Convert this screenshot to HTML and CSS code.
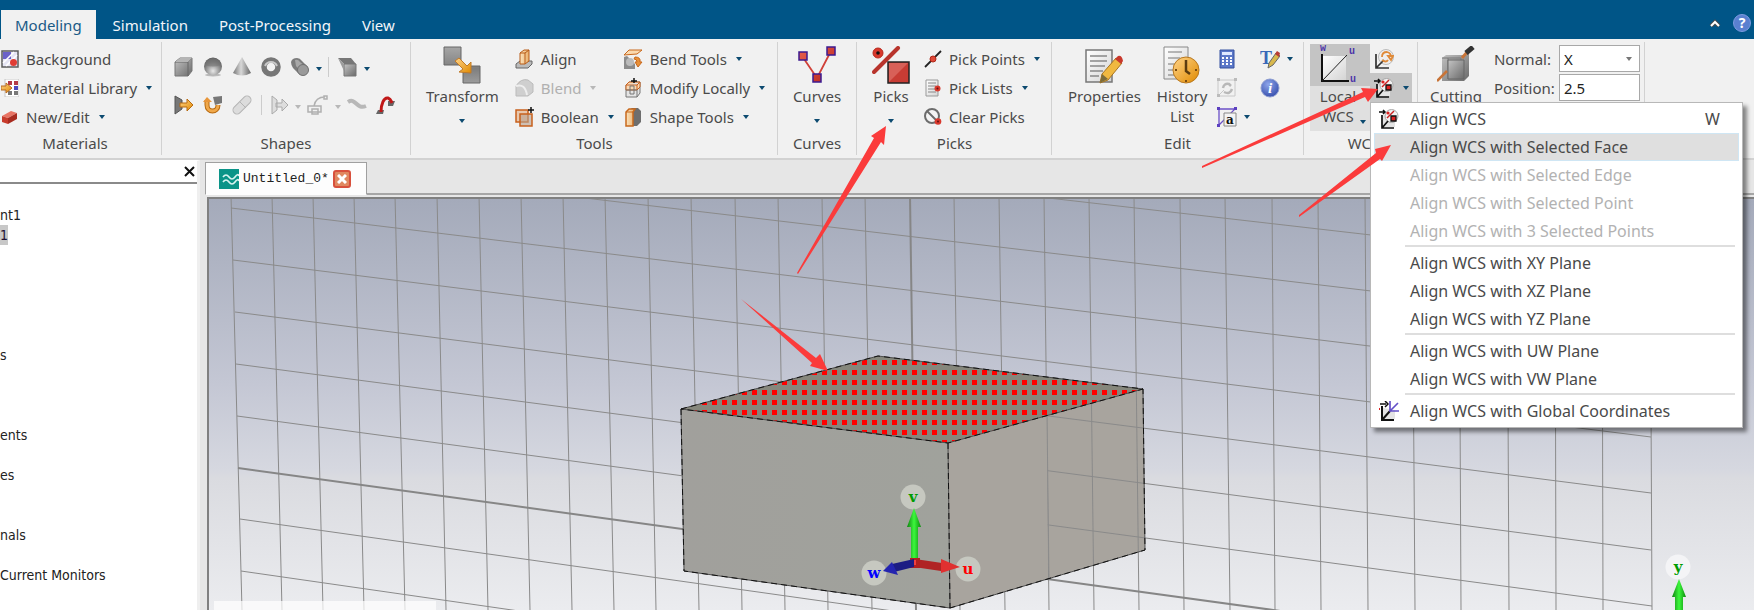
FILE: index.html
```html
<!DOCTYPE html>
<html lang="en">
<head>
<meta charset="utf-8">
<title>Untitled_0*</title>
<link rel="stylesheet" href="styles.css">
</head>
<body>
<svg class="defs" width="0" height="0" aria-hidden="true">
  <defs>
    <linearGradient id="steel" x1="0" y1="0" x2="1" y2="1"><stop offset="0" stop-color="#c4c4c4"/><stop offset="1" stop-color="#6a6a6a"/></linearGradient>
    <linearGradient id="steelH" x1="0" y1="0" x2="1" y2="0"><stop offset="0" stop-color="#777"/><stop offset=".45" stop-color="#d8d8d8"/><stop offset="1" stop-color="#666"/></linearGradient>
    <linearGradient id="steelV" x1="0" y1="0" x2="0" y2="1"><stop offset="0" stop-color="#a6a6a6"/><stop offset=".6" stop-color="#7e7e7e"/><stop offset="1" stop-color="#9c9c9c"/></linearGradient>
    <radialGradient id="ball" cx=".5" cy=".75" r=".7"><stop offset="0" stop-color="#e8e8e8"/><stop offset=".7" stop-color="#7a7a7a"/><stop offset="1" stop-color="#5a5a5a"/></radialGradient>
    <linearGradient id="amber" x1="0" y1="0" x2="1" y2="1"><stop offset="0" stop-color="#ffd48a"/><stop offset="1" stop-color="#e08a00"/></linearGradient>
    <linearGradient id="peach" x1="0" y1="0" x2="1" y2="0"><stop offset="0" stop-color="#fbe3bd"/><stop offset="1" stop-color="#e9ae6a"/></linearGradient>
    <linearGradient id="red" x1="0" y1="0" x2="1" y2="1"><stop offset="0" stop-color="#e8604e"/><stop offset="1" stop-color="#b8241c"/></linearGradient>
    <linearGradient id="paper" x1="0" y1="0" x2="1" y2="1"><stop offset="0" stop-color="#fff"/><stop offset="1" stop-color="#d4d4d4"/></linearGradient>
    <radialGradient id="blue" cx=".4" cy=".3" r=".8"><stop offset="0" stop-color="#8ea6ea"/><stop offset="1" stop-color="#2f47a8"/></radialGradient>
    <symbol id="align-wcs" viewBox="0 0 20 20">
      <path d="M4 6v12h12V9z" fill="#e4e4e4"/>
      <circle cx="12.500" cy="7" r="6.500" fill="#f2f2f2" stroke="#a8a8a8"/>
      <path d="M3 6v13h12M3 19l6-7" fill="none" stroke="#111" stroke-width="1.700"/>
      <path d="M0 3h5M4 1l2 2-2 2" fill="none" stroke="#111" stroke-width="1.500"/>
      <circle cx="9" cy="4" r="1.600" fill="#d22"/><path d="M8 9l7-7" stroke="#c22" stroke-width="1.500"/>
      <path d="M12 7h5v5h-5z" fill="#d22" stroke="#111" stroke-width="1.300"/>
    </symbol>
  </defs>
</svg>

<div class="app">
  <header class="titlebar">
    <nav class="tabs">
      <button class="tab tab-active">Modeling</button>
      <button class="tab">Simulation</button>
      <button class="tab">Post-Processing</button>
      <button class="tab">View</button>
    </nav>
    <div class="title-tools">
      <button class="plain" aria-label="Collapse ribbon"><svg width="12" height="8" viewBox="0 0 12 8"><path d="M2 7l4-4 4 4" fill="none" stroke="#4a4a4a" stroke-width="4"/><path d="M2 7l4-4 4 4" fill="none" stroke="#fff" stroke-width="2"/></svg></button>
      <button class="plain help" aria-label="Help">?</button>
    </div>
  </header>

  <section class="ribbon">
    <div class="group g-materials">
      <div class="body">
        <div class="col">
          <button class="item"><svg width="18" height="18" viewBox="0 0 18 18"><path d="M1 1h16v16H1z" fill="#e4e4f4" stroke="#5c5c5c" stroke-width="1.500"/><path d="M2 2h8v7H2z" fill="#6b62c8"/><path d="M2 13l11-11M5 16L16 5" stroke="#fff" stroke-width="1.500"/><circle cx="12.500" cy="12.500" r="3.500" fill="#e03c34"/></svg><span>Background</span></button>
          <button class="item"><svg width="18" height="18" viewBox="0 0 18 18"><path d="M4 0h14v18H4z" fill="#fff" stroke="#c6c6c6"/><path d="M7 2h4v4H7zM13 2h4v4h-4z" fill="#b43a48"/><path d="M13 7h4v4h-4z" fill="#4c49c0"/><path d="M7 12h4v4H7zM13 12h4v4h-4z" fill="#777"/><path d="M0 7h5V4l6 5-6 5v-3H0z" fill="url(#amber)" stroke="#b86a20"/></svg><span>Material Library</span><i class="caret"></i></button>
          <button class="item"><svg width="18" height="18" viewBox="0 0 18 18"><path d="M1 8l9-5 6 2-9 5z" fill="#e87464"/><path d="M1 8l6 2v6l-6-2z" fill="#c83c2c"/><path d="M7 10l9-5v6l-9 5z" fill="#a82c20"/></svg><span>New/Edit</span><i class="caret"></i></button>
        </div>
      </div>
      <div class="label">Materials</div>
    </div>

    <div class="group g-shapes">
      <div class="body shapes">
        <div class="strip">
          <button class="plain" aria-label="Brick"><svg width="20" height="20" viewBox="0 0 20 20"><path d="M1 5l5-4h12v13l-4 5H1z" fill="url(#steel)" stroke="#777"/><path d="M1 5h13l4-4M14 5v14" fill="none" stroke="#666"/><path d="M1 5l5-4h12l-4 4z" fill="#b5b5b5"/></svg></button>
          <button class="plain" aria-label="Sphere"><svg width="20" height="20" viewBox="0 0 20 20"><ellipse cx="10" cy="18" rx="8" ry="1.500" fill="#bbb"/><circle cx="10" cy="9.500" r="9" fill="url(#ball)"/><path d="M2 8a8 7 0 0 1 16 0q-8 3-16 0z" fill="#777" opacity=".6"/></svg></button>
          <button class="plain" aria-label="Cone"><svg width="20" height="20" viewBox="0 0 20 20"><path d="M10 0l9 16q-9 5-18 0z" fill="url(#steelH)"/></svg></button>
          <button class="plain" aria-label="Torus"><svg width="20" height="20" viewBox="0 0 20 20"><circle cx="10" cy="10" r="7" fill="none" stroke="#777" stroke-width="5.500"/><path d="M4 9a6.500 6.500 0 0 1 12 0" fill="none" stroke="#c8c8c8" stroke-width="2"/></svg></button>
          <button class="plain" aria-label="Cylinder"><svg width="20" height="20" viewBox="0 0 20 20"><path d="M1 5q1-4 6-4 3 0 5 3l6 6-8 8-7-7q-2-3-2-6z" fill="#7c7c7c"/><path d="M5 3q3-1 5 2l6 5-5 5-5-6z" fill="#a8a8a8"/><circle cx="13" cy="13" r="5.500" fill="#9a9a9a" stroke="#707070"/></svg></button>
          <i class="caret"></i><i class="bar"></i>
          <button class="plain" aria-label="Extrude face"><svg width="20" height="20" viewBox="0 0 20 20"><path d="M0 1h13l5 6H6z" fill="#777"/><path d="M6 7h12v12H6z" fill="url(#steel)" stroke="#777"/><path d="M0 1l6 6v7z" fill="#9c9c9c"/></svg></button>
          <i class="caret"></i>
        </div>
        <div class="strip">
          <button class="plain" aria-label="Extrude"><svg width="20" height="20" viewBox="0 0 20 20"><path d="M1 1l7 4v9l-7 5z" fill="#777" stroke="#555"/><path d="M6 8h7V4l6 6-6 6v-4H6z" fill="url(#amber)" stroke="#b86a10"/></svg></button>
          <button class="plain" aria-label="Rotate"><svg width="20" height="20" viewBox="0 0 20 20"><path d="M10 2l9-1v7l-7 2z" fill="#777"/><path d="M4 5v5c0 8 11 8 11 0" fill="none" stroke="#b86a10" stroke-width="5"/><path d="M4 5v5c0 8 11 8 11 0" fill="none" stroke="#f0a84a" stroke-width="3"/><path d="M0 7l4-5 5 5z" fill="#e8963a"/></svg></button>
          <button class="plain" aria-label="Loft" disabled><svg width="20" height="20" viewBox="0 0 20 20"><path d="M5 15L15 5" stroke="#b4b4b4" stroke-width="9" stroke-linecap="round"/><path d="M5 15L15 5" stroke="#dcdcdc" stroke-width="7" stroke-linecap="round"/><path d="M8 7l6 6" stroke="#b4b4b4"/></svg></button>
          <i class="bar"></i>
          <button class="plain" aria-label="Extrude curve" disabled><svg width="18" height="20" viewBox="0 0 18 20"><path d="M1 1l5 4v10l-5 4zM5 8h6V4l6 6-6 6v-4H5z" fill="#ddd" stroke="#aaa"/></svg></button>
          <i class="caret caret-off"></i>
          <button class="plain" aria-label="Sweep curve" disabled><svg width="22" height="20" viewBox="0 0 22 20"><path d="M1 11h13v6H1zM5 14h6v5H5zM7 11c1-6 4-9 11-9M17 1h3v3h-3z" fill="none" stroke="#b0b0b0" stroke-width="1.500"/></svg></button>
          <i class="caret caret-off"></i>
          <button class="plain" aria-label="Trace" disabled><svg width="20" height="20" viewBox="0 0 20 20"><path d="M1 7c8-5 8 8 18 4" fill="none" stroke="#b8b8b8" stroke-width="4"/></svg></button>
          <button class="plain" aria-label="Bond wire"><svg width="20" height="20" viewBox="0 0 20 20"><path d="M2 15h6l-1 4H0zM12 6h7l-2 5h-5z" fill="#666"/><path d="M5 17c0-8 3-15 7-14 3 1 3 3 4 5" fill="none" stroke="#c01818" stroke-width="3"/></svg></button>
        </div>
      </div>
      <div class="label">Shapes</div>
    </div>

    <div class="group g-tools">
      <div class="body">
        <button class="big"><svg width="38" height="38" viewBox="0 0 38 38"><path d="M1 1h17v18H1zM20 20h17v17H20z" fill="url(#steelV)" stroke="#666"/><path d="M12 15l4-3 8 8 4-4v11l-12-1 4-3z" fill="url(#amber)" stroke="#c07a28"/></svg><span>Transform</span><i class="caret"></i></button>
        <div class="col col-second">
          <button class="item"><svg width="19" height="20" viewBox="0 0 19 20"><path d="M1 15l4-3h12v3l-4 4H1z" fill="#bbb" stroke="#666"/><path d="M5 4l4-3h5v11l-4 3H5z" fill="url(#peach)" stroke="#b85c18"/><path d="M5 4h5l4-3M10 4v11" fill="none" stroke="#b85c18"/></svg><span>Align</span></button>
          <button class="item" disabled><svg width="19" height="20" viewBox="0 0 19 20"><path d="M1 8q5-8 12-6l5 4v8l-5 4H1z" fill="#cfcfcf" stroke="#bbb"/><path d="M1 8q9-3 11 9" fill="none" stroke="#eee" stroke-width="2"/></svg><span>Blend</span><i class="caret caret-off"></i></button>
          <button class="item"><svg width="19" height="20" viewBox="0 0 19 20"><path d="M1 3h12v12H1z" fill="#e8c8ae" stroke="#c8601c" stroke-width="1.500"/><path d="M5 7h12v12H5z" fill="#b8a08e" fill-opacity=".6" stroke="#c8601c" stroke-width="1.500"/><path d="M13 3h6M16 0v6" stroke="#111" stroke-width="1.500"/></svg><span>Boolean</span><i class="caret"></i></button>
        </div>
        <div class="col col-third">
          <button class="item"><svg width="20" height="20" viewBox="0 0 20 20"><path d="M1 6l5-5h13l-5 4z" fill="#fbd9ae" stroke="#c8681c"/><path d="M1 8l3-1 8 8v5H1z" fill="#8c8c8c"/><circle cx="7" cy="13" r="4" fill="#bbb"/><path d="M12 8q6 0 5 5h2l-4 5-3-5h2q0-3-3-3z" fill="#e89038" stroke="#c8681c"/></svg><span>Bend Tools</span><i class="caret"></i></button>
          <button class="item"><svg width="20" height="20" viewBox="0 0 20 20"><path d="M3 7l3-3h11v11l-3 4H3z" fill="#e4e4e4" stroke="#777"/><path d="M3 7l3-3h11v5l-3 3H3zM3 7h11l3-3M14 7v5" fill="#f8d8b4" stroke="#c8601c"/><path d="M3 12h11v7M7 8h4v8H7z" fill="none" stroke="#777"/><path d="M8 3h6M11 0v5" stroke="#111" stroke-width="1.500"/></svg><span>Modify Locally</span><i class="caret"></i></button>
          <button class="item"><svg width="20" height="20" viewBox="0 0 20 20"><path d="M6 3l3-2h6l3 3v11l-4 4H6z" fill="#6e6e6e"/><path d="M3 5l3-3h6l-2 3v14H3z" fill="url(#peach)" stroke="#c8681c" stroke-width="1.500"/><path d="M3 5h7" stroke="#c8681c"/></svg><span>Shape Tools</span><i class="caret"></i></button>
        </div>
      </div>
      <div class="label">Tools</div>
    </div>

    <div class="group g-curves">
      <div class="body center">
        <button class="big"><svg width="38" height="38" viewBox="0 0 38 38"><path d="M4 10l15 22L33 5" fill="none" stroke="#d04038" stroke-width="1.800"/><path d="M1 6h8v8H1zM29 1h8v8h-8zM15 28h8v8h-8z" fill="url(#red)" stroke="#3c1a90" stroke-width="1.500"/></svg><span>Curves</span><i class="caret"></i></button>
      </div>
      <div class="label">Curves</div>
    </div>

    <div class="group g-picks">
      <div class="body">
        <button class="big"><svg width="38" height="38" viewBox="0 0 38 38"><circle cx="6" cy="7" r="5" fill="#d8382c" stroke="#b8281c"/><circle cx="6" cy="7" r="1.800" fill="#111"/><path d="M2 26L26 2" stroke="#b8342c" stroke-width="4" stroke-linecap="round"/><path d="M16 16h21v21H16z" fill="#c83c34" stroke="#222" stroke-width="1.500"/><path d="M17 17h19L17 36z" fill="#d86058"/></svg><span>Picks</span><i class="caret"></i></button>
        <div class="col col-picks">
          <button class="item"><svg width="18" height="18" viewBox="0 0 18 18"><path d="M1 17L17 1" stroke="#222" stroke-width="1.800"/><circle cx="9" cy="9" r="3" fill="#e04838" stroke="#b02818"/></svg><span>Pick Points</span><i class="caret"></i></button>
          <button class="item"><svg width="18" height="18" viewBox="0 0 18 18"><path d="M2 1h12v16H2z" fill="url(#paper)" stroke="#999"/><path d="M4 4h8M4 7h8M4 10h8M4 13h8" stroke="#888"/><circle cx="13.500" cy="9.500" r="3" fill="#d8382c"/><circle cx="13.500" cy="9.500" r="1" fill="#611"/></svg><span>Pick Lists</span><i class="caret"></i></button>
          <button class="item"><svg width="18" height="18" viewBox="0 0 18 18"><circle cx="8" cy="8" r="7" fill="#f4f4f4" stroke="#6c6c6c" stroke-width="2"/><path d="M3 3l10 10" stroke="#6c6c6c" stroke-width="2"/><circle cx="14" cy="13.500" r="3.300" fill="#d8382c"/><circle cx="14" cy="13.500" r="1" fill="#611"/></svg><span>Clear Picks</span></button>
        </div>
      </div>
      <div class="label">Picks</div>
    </div>

    <div class="group g-edit">
      <div class="body">
        <button class="big"><svg width="38" height="38" viewBox="0 0 38 38"><path d="M1 4h26v32H1z" fill="url(#paper)" stroke="#777" stroke-width="1.500"/><path d="M5 10h17M5 15h17M5 20h15M5 25h13M5 30h9" stroke="#888" stroke-width="1.500"/><path d="M15 37l2-9L31 12l6 5-14 17z" fill="#f0b840" stroke="#a87420"/><path d="M15 37l2-9 6 5z" fill="#7c6c3c"/><path d="M30 13l3-3q4-1 5 5l-2 3z" fill="#c8382c"/></svg><span>Properties</span></button>
        <button class="big"><svg width="38" height="38" viewBox="0 0 38 38"><path d="M1 1h24v32H1z" fill="url(#paper)" stroke="#888"/><path d="M5 6h14M5 12h12M5 18h8M5 24h6M5 29h6" stroke="#777"/><circle cx="23" cy="24" r="13" fill="url(#amber)" stroke="#b87820"/><path d="M23 14v11l4 3" fill="none" stroke="#5c3c10" stroke-width="2.500"/><path d="M23 34v2M12 24h2M32 24h2" stroke="#7c4c10" stroke-width="2"/></svg><span>History<br>List</span></button>
        <div class="col col-mini">
          <button class="item" aria-label="Calculator"><svg width="20" height="20" viewBox="0 0 20 20"><path d="M3 1h14v18H3z" fill="#5c78c8" stroke="#3450a0"/><path d="M5 3h10v3H5z" fill="#dfe8ff"/><path d="M5 9h2M9 9h2M13 9h2M5 12h2M9 12h2M13 12h2M5 15h2M9 15h2M13 15h2" stroke="#fff" stroke-width="2"/></svg></button>
          <button class="item" aria-label="Update" disabled><svg width="20" height="20" viewBox="0 0 20 20"><path d="M1 18V2h17v16H1l6-6" fill="none" stroke="#c8c8c8"/><path d="M0 0h3v3H0zM17 0h3v3h-3zM0 16h3v3H0z" fill="#bbb"/><path d="M6 10q1-5 6-4l2 2M15 11q-2 6-8 3" fill="none" stroke="#b8b8b8" stroke-width="2.500"/></svg></button>
          <button class="item" aria-label="Parameters"><svg width="20" height="20" viewBox="0 0 20 20"><path d="M2 18V2h16L2 18" fill="none" stroke="#6c50c8" stroke-width="1.300"/><path d="M0 0h3v3H0zM17 0h3v3h-3zM0 17h3v3H0z" fill="#5c40c0"/><path d="M7 6h12v13H7z" fill="#f4f4f4" stroke="#888"/><text x="9" y="17" class="glyph-a">a</text></svg><i class="caret"></i></button>
        </div>
        <div class="col col-mini">
          <button class="item" aria-label="Rename"><svg width="20" height="20" viewBox="0 0 20 20"><text x="0" y="15" class="glyph-t">T</text><path d="M8 19l1-5 7-10 4 3-7 9z" fill="#d8b84c" stroke="#666"/><path d="M15 5l2-3 3 2-1 4z" fill="#b83c34"/></svg><i class="caret"></i></button>
          <button class="item" aria-label="Information"><svg width="20" height="20" viewBox="0 0 20 20"><circle cx="10" cy="10" r="9" fill="url(#blue)" stroke="#8c9cd0"/><text x="8" y="15" class="glyph-i">i</text></svg></button>
        </div>
      </div>
      <div class="label">Edit</div>
    </div>

    <div class="group g-wcs">
      <div class="body">
        <button class="big local"><span class="local-top"><svg width="44" height="40" viewBox="0 0 44 40"><path d="M6 12h24v24H6z" fill="url(#paper)"/><path d="M6 10v27h27" fill="none" stroke="#111" stroke-width="2"/><path d="M6 37l25-26" stroke="#222"/><text x="4" y="7" class="axis">w</text><text x="33" y="10" class="axis">u</text><text x="34" y="38" class="axis">u</text></svg></span><span>Local<br>WCS</span><i class="caret local-caret"></i></button>
        <div class="col wcs-col">
          <button class="item" aria-label="Transform WCS"><svg width="20" height="20" viewBox="0 0 20 20"><circle cx="12" cy="8" r="7.500" fill="#eee" stroke="#bbb"/><path d="M2 5v14h13M2 19l8-8" fill="none" stroke="#333" stroke-width="1.700"/><path d="M8 8q0-5 5-5 4 1 4 5M14 7h5l-2 4zM8 11q4 3 6 0" fill="none" stroke="#e08a38" stroke-width="1.800"/></svg></button>
          <button class="item hot" aria-label="Align WCS"><svg width="20" height="20"><use href="#align-wcs"/></svg><i class="caret"></i></button>
        </div>
      </div>
      <div class="label">WCS</div>
      <menu class="menu">
        <li><button><svg class="menu-icon" width="20" height="20"><use href="#align-wcs"/></svg><span>Align WCS</span><kbd>W</kbd></button></li>
        <li><button class="current">Align WCS with Selected Face</button></li>
        <li><button disabled>Align WCS with Selected Edge</button></li>
        <li><button disabled>Align WCS with Selected Point</button></li>
        <li><button disabled>Align WCS with 3 Selected Points</button></li>
        <li class="rule"></li>
        <li><button>Align WCS with XY Plane</button></li>
        <li><button>Align WCS with XZ Plane</button></li>
        <li><button>Align WCS with YZ Plane</button></li>
        <li class="rule"></li>
        <li><button>Align WCS with UW Plane</button></li>
        <li><button>Align WCS with VW Plane</button></li>
        <li class="rule"></li>
        <li><button><svg class="menu-icon" width="20" height="20" viewBox="0 0 20 20"><path d="M4 7v11h12V9z" fill="#e4e4e4"/><path d="M3 5v14h12M3 19l8-9" fill="none" stroke="#111" stroke-width="2"/><path d="M1 3h6M6 0l3 3-3 3" fill="none" stroke="#111" stroke-width="1.500"/><path d="M11 0v10h9M11 10l8-8" fill="none" stroke="#6450c8" stroke-width="1.700"/><path d="M0 8h1" stroke="#d22" stroke-width="2"/></svg><span>Align WCS with Global Coordinates</span></button></li>
      </menu>
    </div>

    <div class="group g-cut">
      <div class="body">
        <button class="big"><svg width="38" height="38" viewBox="0 0 38 38"><path d="M5 12l4-3h20l3-3v24l-5 5H5z" fill="url(#steel)"/><path d="M5 12h19v23M11 12v21" fill="none" stroke="#777"/><path d="M11 14h16v19H11z" fill="url(#steel)" stroke="#666"/><path d="M0 35l10-10" stroke="#c87438" stroke-width="2.500"/><path d="M25 12l6-7" stroke="#c87438" stroke-width="3"/><path d="M29 7l7-6" stroke="#333" stroke-width="5"/></svg><span>Cutting</span></button>
        <form class="fields">
          <label for="normal">Normal:</label>
          <span class="pick"><select id="normal"><option>X</option><option>Y</option><option>Z</option></select><i class="caret caret-field"></i></span>
          <label for="position">Position:</label>
          <input id="position" type="text" value="2.5">
        </form>
      </div>
    </div>
  </section>

  <main class="work">
    <aside class="tree">
      <div class="tree-head"><button class="plain" aria-label="Close panel"><svg width="12" height="12" viewBox="0 0 12 12"><path d="M1 1l9 9M10 1l-9 9" stroke="#111" stroke-width="2"/></svg></button></div>
      <ul class="nodes">
        <li>nt1</li><li><span class="picked">1</span></li><li></li><li></li><li></li><li></li><li></li><li>s</li><li></li><li></li><li></li><li>ents</li><li></li><li>es</li><li></li><li></li><li>nals</li><li></li><li>Current Monitors</li>
      </ul>
    </aside>
    <section class="docs">
      <div class="doc-tabs">
        <div class="doc-tab">
          <svg width="20" height="20" viewBox="0 0 20 20"><path d="M0 0h20v20H0z" fill="#0b9488"/><path d="M4 8q3-4 6 0t6 0 4-1M4 13q3-4 6 0t6 0 4-1" fill="none" stroke="#d8f4f0" stroke-width="1.700"/></svg>
          <span>Untitled_0*</span>
          <button class="doc-close" aria-label="Close Untitled_0"><svg width="10" height="10" viewBox="0 0 10 10"><path d="M1 1l8 8M9 1L1 9" stroke="#fff" stroke-width="3"/></svg></button>
        </div>
      </div>
      <div class="view">
        <svg class="scene" viewBox="209 199 1545 411" preserveAspectRatio="xMinYMin slice">
          <defs>
            <pattern id="dots" width="10" height="10" patternUnits="userSpaceOnUse" x="882" y="360"><path d="M0 0h5v5H0z" fill="#f00"/></pattern>
            <linearGradient id="leftFace" x1="0" y1="0" x2="1" y2="0"><stop offset="0" stop-color="#a1a09c"/><stop offset="1" stop-color="#a0a29c"/></linearGradient>
            <linearGradient id="green" x1="0" y1="0" x2="1" y2="0"><stop offset="0" stop-color="#128012"/><stop offset=".5" stop-color="#3cf83c"/><stop offset="1" stop-color="#0c8c0c"/></linearGradient>
            <clipPath id="behind"><path d="M1047 416L1143 389l2 161-97 30z"/></clipPath>
            <g id="grid" fill="none" stroke="#8a8a8a" stroke-width="1">
              <path d="M231 195L242 610M272 195L282 610M313 195L323 610M354 195L364 610M395 195L405 610M437 195L446 610M479 195L488 610M521 195L530 610M563 195L572 610M605 195L614 610M648 195L656 610M691 195L699 610M735 195L742 610M778 195L785 610M822 195L828 610M865 195L872 610M954 195L960 610M999 195L1005 610M1044 195L1049 610M1089 195L1094 610M1134 195L1139 610M1180 195L1184 610M1225 195L1230 610M1272 195L1275 610M1318 195L1321 610M1365 195L1368 610M1412 195L1415 610M1459 195L1461 610M1507 195L1509 610M1555 195L1556 610M1602 195L1603 610M1650 195L1652 610"/>
              <path d="M228 52L1650 211M229 104L1650 267M230 156L1650 324M231 208L1650 380M233 260L1651 437M235 312L1651 493M236 364L1651 550M237 416L1652 606M240 519L1652 718M241 571L1652 774"/>
              <path d="M910 195L916 610M238 468L1652 662" stroke="#868686" stroke-width="2"/>
            </g>
          </defs>
          <use href="#grid"/>
          <path d="M681 409L948 443 950 608 684 571z" fill="url(#leftFace)"/>
          <path d="M948 443L1143 389 1145 550 950 608z" fill="#a8a49e"/>
          <g clip-path="url(#behind)"><use href="#grid"/></g>
          <path d="M1047 414L1049 580" stroke="#8c8c8c"/>
          <path d="M681 409L878 356 1143 389 948 443z" fill="#86877c"/>
          <path d="M681 409L878 356 1143 389 948 443z" fill="url(#dots)"/>
          <path d="M681 409L878 356 1143 389 948 443zM681 409L684 571 950 608 1145 550 1143 389M948 443L950 608" fill="none" stroke="#4c4c4c"/>
          <path d="M681 409L878 356 1143 389 948 443zM681 409L684 571 950 608 1145 550 1143 389M948 443L950 608" fill="none" stroke="#111" stroke-dasharray="6 4"/>
          <g class="axis-bubbles"><circle cx="913" cy="497" r="12.500"/><circle cx="874" cy="573" r="12.500"/><circle cx="968" cy="569" r="12.500"/></g>
          <circle cx="1678" cy="567" r="12.500" fill="#f4f4f6"/>
          <path d="M911 525h7v38h-7zM914 508l7 19h-14z" fill="url(#green)"/>
          <path d="M1675 594h8v16h-8zM1679 579l7 18h-14z" fill="url(#green)"/>
          <path d="M915 559l27 4-1 8-27-4z" fill="#b02424"/><path d="M941 559l19 8-19 6z" fill="#e03030"/>
          <path d="M910 558h10v10h-10z" fill="#b02020"/><path d="M912 560h4v5h-4z" fill="#f04040"/>
          <path d="M914 559l-22 5 2 8 20-5z" fill="#1c1c84"/><path d="M883 571l9-9 6 13z" fill="#2424b0"/>
          <g class="axis-text"><text x="913" y="502" fill="#009c00">v</text><text x="874" y="578" fill="#00f">w</text><text x="968" y="574" fill="#f00">u</text><text x="1678" y="572" fill="#009c00">y</text></g>
          <path d="M214 601H436V610H214z" fill="#fff" fill-opacity=".7"/>
        </svg>
      </div>
    </section>
  </main>

  <svg class="notes" width="1754" height="610" viewBox="0 0 1754 610" aria-hidden="true">
    <g fill="#fb3b3b">
      <path d="M797 273L874 138 871 136 886 126 884 145 881 142 798 274z"/>
      <path d="M741 299L816 358 820 354 828 371 810 366 812 363z"/>
      <path d="M1202 166L1363 92 1361 88 1378 89 1368 102 1365 97 1202 168z"/>
      <path d="M1299 215L1376 153 1375 149 1391 145 1382 161 1380 159 1299 217z"/>
    </g>
  </svg>
</div>
</body>
</html>
```
FILE: styles.css
```css
* { box-sizing: border-box; }
body { margin: 0; font-family: "Noto Sans", "Open Sans", sans-serif; font-size: 15px; color: #4a4a4a; }
button { font: inherit; color: inherit; background: none; border: 0; padding: 0; margin: 0; text-align: left; white-space: nowrap; }
svg { display: block; flex: none; }
.defs { position: absolute; }
.app { position: relative; height: 100vh; display: flex; flex-direction: column; overflow: hidden; background: #e6e6e6; }

.titlebar { flex: none; height: 39px; background: #005587; display: flex; justify-content: space-between; padding-top: 10px; }
.tabs { display: flex; gap: 3px; padding-left: 1px; }
.tab { padding: 0 14px; color: #f2f6fa; line-height: 30px; }
.tab-active { background: #f1f1f1; color: #1a5a86; }
.title-tools { display: flex; align-items: center; gap: 12px; padding: 0 3px 4px 0; }
.help { width: 18px; height: 18px; border-radius: 50%; background: #5a80d0; border: 1px solid #7c9ae0; color: #fff; font-size: 14px; font-weight: 700; line-height: 16px; text-align: center; }

.ribbon { flex: none; display: flex; height: 121px; background: #f1f1f1; border-bottom: 2px solid #d2d2d2; padding: 3px 0; }
.group { position: relative; flex: none; display: flex; flex-direction: column; border-right: 1px solid #d2d2d2; }
.body { flex: 1; display: flex; padding-top: 2px; align-items: flex-start; }
.label { line-height: 20px; text-align: center; padding-bottom: 2px; }
.col { display: flex; flex-direction: column; }
.item { display: flex; align-items: center; gap: 7px; height: 29px; }
.item:disabled { color: #b0b0b0; }
.item .caret { margin-left: 2px; }
.caret { flex: none; width: 0; height: 0; border: 3px solid transparent; border-top: 4px solid #0c4a70; border-bottom: 0; }
.caret-off { border-top-color: #b8b8b8; }
.big { display: flex; flex-direction: column; align-items: center; text-align: center; line-height: 20px; padding-top: 2px; }
.big span { margin-top: 2px; }
.big .caret { margin-top: 13px; }
.center { justify-content: center; }

.g-materials { width: 162px; padding-left: 1px; }
.g-materials .label { padding-right: 12px; }
.g-shapes { width: 249px; }
.shapes { flex-direction: column; gap: 18px; padding: 15px 0 0 12px; }
.strip { display: flex; align-items: center; gap: 9px; height: 20px; }
.strip .caret { margin: 4px -3px 0; }
.bar { width: 1px; height: 20px; background: #ccc; }
.g-tools { width: 367px; padding-left: 15px; }
.g-tools .label { padding-right: 14px; }
.col-second { margin-left: 16px; width: 108px; }
.g-curves { width: 79px; }
.g-picks { width: 195px; padding-left: 15px; }
.col-picks { margin-left: 14px; }
.g-picks .label { padding-right: 14px; }
.g-edit { width: 252px; padding-left: 16px; }
.g-edit .body { gap: 16px; }
.g-edit .label { padding-right: 16px; }
.col-mini { margin-left: -6px; width: 34px; }
.col-mini + .col-mini { margin-left: -7px; }
.col-mini .caret { margin-left: 0; }
.glyph-a { font: 700 12px "DejaVu Serif", serif; fill: #111; }
.glyph-t { font: 700 18px "Liberation Serif", serif; fill: #3868b8; }
.glyph-i { font: italic 700 15px "Liberation Serif", serif; fill: #fff; }
.axis { font: 700 10px "Liberation Mono", monospace; fill: #4c34a8; }

.g-wcs { width: 114px; padding-left: 6px; }
.local { position: relative; width: 60px; height: 87px; background: #e0e0e0; padding: 0; }
.local .local-top { margin: 0; width: 60px; height: 42px; padding-left: 6px; background: #c4c4c4; }
.local span + span { margin: 0; padding-right: 4px; }
.big .local-caret { position: absolute; right: 4px; bottom: 7px; margin: 0; }
.wcs-col .item { padding-left: 4px; }
.wcs-col .hot { background: #c6c6c6; width: 42px; }

.g-cut { width: 227px; padding-left: 12px; }
.g-cut .body { gap: 12px; }
.fields { margin: 0; flex: 1; display: grid; grid-template-columns: 65px 81px; grid-auto-rows: 27px; row-gap: 2px; padding-top: 1px; align-items: center; }
.pick { position: relative; display: flex; height: 27px; }
.fields select, .fields input { appearance: none; width: 100%; height: 27px; border: 1px solid #a8a8a8; border-radius: 0; background: #fff; font: inherit; color: #222; padding: 0 4px; margin: 0; }
.caret-field { position: absolute; right: 8px; top: 12px; border-top-color: #777; }

.menu { position: absolute; z-index: 2; left: 66px; top: 60px; width: 373px; margin: 0; padding: 2px 3px; list-style: none; font-size: 16px; background: #fff; border: 1px solid #b8b8b8; box-shadow: 4px 4px 4px rgba(0,0,0,.45); }
.menu button { position: relative; display: flex; align-items: center; justify-content: space-between; width: 100%; height: 28px; padding: 0 18px 0 35px; border: 1px solid transparent; }
.menu button:disabled { color: #b2b2b2; }
.menu .current { background: #dfdfdf; border-color: #cfe6f4; }
.menu-icon { position: absolute; left: 4px; top: 3px; }
.menu kbd { font: inherit; }
.rule { height: 4px; margin: 0 4px 0 31px; border-top: 2px solid #dedede; }

.work { flex: 1; min-height: 0; display: flex; }
.tree { flex: none; width: 200px; background: #fff; border-top: 1px solid #fff; border-right: 3px solid #efefef; overflow: hidden; }
.tree-head { height: 23px; border-bottom: 2px solid #8a8a8a; display: flex; justify-content: flex-end; align-items: center; padding-right: 1px; }
.tree-head .plain { padding: 0 0 0 6px; }
.nodes { list-style: none; margin: 0; padding: 21px 0 0; font: 14px/20px "DejaVu Sans Condensed", "DejaVu Sans", sans-serif; color: #222; }
.nodes li { height: 20px; white-space: nowrap; }
.picked { display: inline-block; background: #c8c8c8; color: #213; }

.docs { flex: 1; min-width: 0; display: flex; flex-direction: column; margin-left: 5px; }
.doc-tabs { flex: none; height: 35px; display: flex; border-bottom: 2px solid #a6a6a6; padding-top: 2px; }
.doc-tab { width: 162px; height: 33px; background: #fdfdfd; border: 1px solid #a0a0a0; border-bottom-color: #fdfdfd; display: flex; align-items: center; gap: 4px; padding-left: 13px; font: 13px "Liberation Mono", monospace; color: #222; }
.doc-close { width: 18px; height: 18px; border: 2px solid #d8503c; border-radius: 3px; background: #e08860; display: flex; align-items: center; justify-content: center; }
.view { flex: 1; min-height: 0; margin-top: 2px; border: 2px solid #808080; border-right: 0; border-bottom: 0; margin-left: 2px; background: linear-gradient(#a4aaba, #c4c7d4 45%, #d6d8e0 66%, #dadbe0 68%, #ebecef); overflow: hidden; }
.scene { width: 100%; height: 100%; }
.axis-bubbles { fill: #c6c8c0; }
.axis-text { font: 700 15px "DejaVu Serif", serif; text-anchor: middle; }
.notes { position: absolute; z-index: 3; left: 0; top: 0; pointer-events: none; }
```
